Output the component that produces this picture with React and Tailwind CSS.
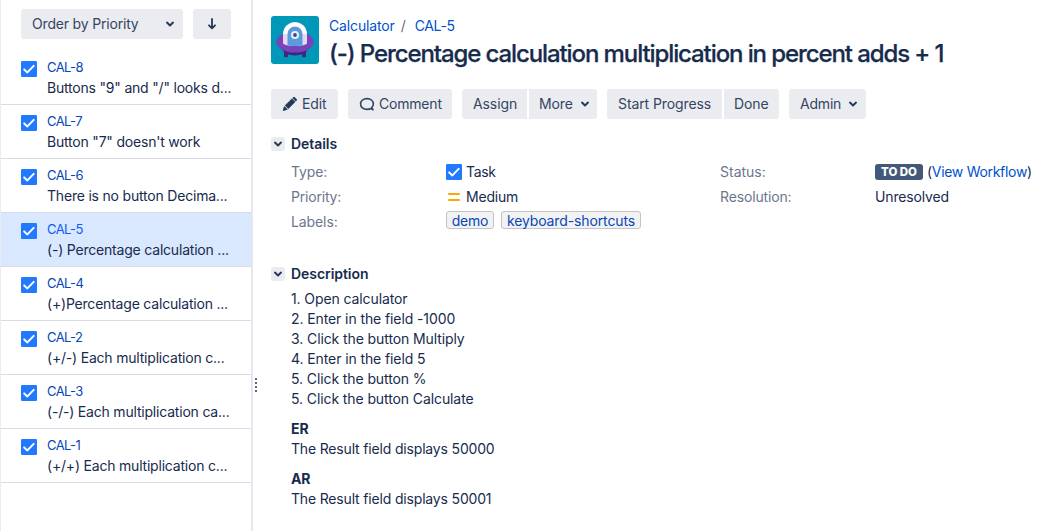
import React from "react";

const issues = [
  { id: "CAL-8", title: 'Buttons "9" and "/" looks d...' },
  { id: "CAL-7", title: 'Button "7" doesn\'t work' },
  { id: "CAL-6", title: "There is no button Decima..." },
  { id: "CAL-5", title: "(-) Percentage calculation ...", selected: true },
  { id: "CAL-4", title: "(+)Percentage calculation ..." },
  { id: "CAL-2", title: "(+/-) Each multiplication c..." },
  { id: "CAL-3", title: "(-/-) Each multiplication ca..." },
  { id: "CAL-1", title: "(+/+) Each multiplication c..." },
];

const steps = [
  "1. Open calculator",
  "2. Enter in the field -1000",
  "3. Click the button Multiply",
  "4. Enter in the field 5",
  "5. Click the button %",
  "5. Click the button Calculate",
];

function TaskIcon() {
  return (
    <svg width="16" height="16" viewBox="0 0 16 16" className="block shrink-0">
      <rect width="16" height="16" rx="1.2" fill="#2079ff" />
      <path d="M3.2 8.4 6.4 11.4 12.7 4.9" fill="none" stroke="#fff" strokeWidth="2" strokeLinecap="round" strokeLinejoin="round" />
    </svg>
  );
}

function Chevron() {
  return (
    <svg width="10" height="8" viewBox="0 0 10 8" className="block shrink-0">
      <path d="M2 2.6 5 5.4 8 2.6" fill="none" stroke="#253858" strokeWidth="2" strokeLinecap="round" strokeLinejoin="round" />
    </svg>
  );
}

function Avatar() {
  return (
    <svg width="48" height="48" viewBox="0 0 48 48" className="block shrink-0">
      <rect width="48" height="48" rx="3" fill="#0098b8" />
      <path d="M13 34h4v6.2a1 1 0 0 1-1 1h-2a1 1 0 0 1-1-1zM31 34h4v6.2a1 1 0 0 1-1 1h-2a1 1 0 0 1-1-1z" fill="#43267d" />
      <path d="M11 33c3 8.500 23 8.500 26 0z" fill="#43267d" />
      <ellipse cx="24" cy="26" rx="18.8" ry="10.5" fill="#7744bb" />
      <path d="M12 18a12 12 0 0 1 24 0v9c0 4-24 4-24 0z" fill="#e3daf2" />
      <path d="M12.500 18a11.5 11.5 0 0 1 23 0z" fill="#fff" />
      <path d="M16.500 18a7.5 7.5 0 0 1 15 0v11.3c-4 1-11 1-15 0z" fill="#5a9bdc" />
      <circle cx="24" cy="19" r="4" fill="#e9eefb" />
      <circle cx="24" cy="19" r="1.9" fill="#344c86" />
    </svg>
  );
}

function Button({ className, children }) {
  return (
    <button className={"flex h-[30px] items-center whitespace-nowrap bg-[#ebecf0] text-[#344563] " + className}>
      {children}
    </button>
  );
}

function SectionTitle({ children }) {
  return (
    <h2 className="flex h-5 items-center gap-1.5 font-semibold tracking-[-0.05px]">
      <span className="flex size-3.5 items-center justify-center rounded-[3px] bg-[#ebecf0]">
        <Chevron />
      </span>
      {children}
    </h2>
  );
}

function Sidebar() {
  return (
    <aside className="flex w-[253px] shrink-0 flex-col border-l border-r-2 border-l-[#ebecf0] border-r-[#e6e7ee]">
      <div className="flex h-[51px] gap-2.5 pl-5 pt-[9px]">
        <Button className="w-[162px] justify-between rounded-[3px] pl-[11px] pr-2">
          <span className="tracking-[-0.18px]">Order by Priority</span>
          <Chevron />
        </Button>
        <Button className="w-[38px] justify-center rounded-[3px]">
          <svg width="10" height="12" viewBox="0 0 10 12">
            <path d="M5 1v9M2 7.300l3 3 3-3" fill="none" stroke="#253858" strokeWidth="1.8" strokeLinecap="round" strokeLinejoin="round" />
          </svg>
        </Button>
      </div>
      <ul>
        {issues.map((it) => (
          <li
            key={it.id}
            className={"flex h-[54px] gap-2.5 border-b border-[#dadbe2] pl-5 pt-[9px] " + (it.selected ? "bg-[#d9e7ff]" : "")}
          >
            <div className="pt-px">
              <TaskIcon />
            </div>
            <div className="flex flex-col whitespace-nowrap">
              <span className={"h-[18px] text-[13px] leading-[15px] tracking-[-0.6px] " + (it.selected ? "text-[#0c5cf5]" : "text-[#0747b8]")}>{it.id}</span>
              <span className="leading-5 tracking-[-0.2px]">{it.title}</span>
            </div>
          </li>
        ))}
      </ul>
    </aside>
  );
}

export default function App() {
  return (
    <div className="flex h-[531px] w-[1044px] overflow-hidden bg-white font-['Inter',sans-serif] text-sm leading-5 text-[#172b4d]">
      <Sidebar />
      <div className="flex w-[18px] shrink-0 flex-col gap-0.5 pl-0.5 pt-[378px]">
        <i className="size-0.5 bg-[#5e6c84]" />
        <i className="size-0.5 bg-[#5e6c84]" />
        <i className="size-0.5 bg-[#5e6c84]" />
        <i className="size-0.5 bg-[#5e6c84]" />
      </div>
      <main className="flex min-w-0 flex-1 flex-col pt-4">
        <header className="flex h-[73px] gap-2.5">
          <Avatar />
          <div className="whitespace-nowrap">
            <nav className="flex h-5 items-center text-[#0052cc]">
              <a className="tracking-[-0.15px]">Calculator</a>
              <span className="w-5 pl-[6px] text-[#5e6c84]">/</span>
              <a className="tracking-[-0.35px]">CAL-5</a>
            </nav>
            <h1 className="text-2xl font-medium leading-9 tracking-[-1.1px] [-webkit-text-stroke:0.25px_#172b4d]">
              (-) Percentage calculation multiplication in percent adds + 1
            </h1>
          </div>
        </header>

        <div className="flex h-[45px] gap-2.5">
          <Button className="w-[67px] gap-1 rounded-[3px] pl-[11px] tracking-[-0.1px]">
            <svg width="16" height="16" viewBox="0 0 16 16" className="shrink-0">
              <path d="M1.200 14.5 2.4 10.6 5.2 13.4zM3.200 9.5 9.9 2.9 12.9 5.9 6.3 12.6zM10.700 2.1l.5-.5a1.2 1.2 0 0 1 1.7 0L14.200 3a1.2 1.2 0 0 1 0 1.700l-.5.5z" fill="#253858" stroke="#253858" strokeWidth=".8" strokeLinejoin="round" />
            </svg>
            Edit
          </Button>
          <Button className="w-[104px] gap-1 rounded-[3px] pl-[11px] tracking-[-0.2px]">
            <svg width="16" height="16" viewBox="0 0 16 16" className="shrink-0">
              <path d="M12 12.5C10.900 13.200 9.500 13.400 8 13.400 4.300 13.400 1.600 11.200 1.600 8 1.600 4.800 4.400 2.600 8 2.600s6.300 2.200 6.300 5.400c0 1.500-.6 2.700-1.600 3.600l1.300 2.100z" fill="none" stroke="#344563" strokeWidth="1.6" strokeLinejoin="round" />
            </svg>
            Comment
          </Button>
          <div className="flex gap-0.5">
            <Button className="w-[65px] rounded-l-[3px] pl-[11px] tracking-[-0.1px]">Assign</Button>
            <Button className="w-[68px] justify-between rounded-r-[3px] pl-2.5 pr-[7px] tracking-[-0.1px]">
              More
              <Chevron />
            </Button>
          </div>
          <div className="flex gap-0.5">
            <Button className="w-[115px] rounded-l-[3px] pl-[11px] tracking-[-0.1px]">Start Progress</Button>
            <Button className="w-[55px] rounded-r-[3px] pl-2.5 tracking-[-0.1px]">Done</Button>
          </div>
          <Button className="w-[77px] justify-between rounded-[3px] pl-[11px] pr-2 tracking-[-0.2px]">
            Admin
            <Chevron />
          </Button>
        </div>

        <section className="h-[130px] whitespace-nowrap">
          <SectionTitle>Details</SectionTitle>
          <div className="flex pl-5 pt-[5px] leading-[25px]">
            <dl className="grid w-[429px] auto-rows-[25px] grid-cols-[155px_1fr]">
              <dt className="tracking-[-0.15px] text-[#6b778c]">Type:</dt>
              <dd className="flex items-center gap-1 tracking-[-0.3px]">
                <TaskIcon />
                Task
              </dd>
              <dt className="tracking-[-0.2px] text-[#6b778c]">Priority:</dt>
              <dd className="flex items-center gap-1 tracking-[-0.2px]">
                <svg width="16" height="16" viewBox="0 0 16 16">
                  <path d="M3 5h10M3 11h10" stroke="#ffa500" strokeWidth="2" strokeLinecap="round" />
                </svg>
                Medium
              </dd>
              <dt className="tracking-[-0.1px] text-[#6b778c]">Labels:</dt>
              <dd className="flex items-start gap-[7px] pt-[2px] text-[#0747b8]">
                <a className="flex h-[18px] w-12 items-center justify-center rounded-[3px] border border-[#c4c4c4] bg-[#f2f2f2] pt-px leading-[17px] tracking-[-0.2px]">demo</a>
                <a className="flex h-[18px] w-[140px] items-center justify-center rounded-[3px] border border-[#c4c4c4] bg-[#f2f2f2] pt-px leading-[17px] tracking-[-0.12px]">keyboard-shortcuts</a>
              </dd>
            </dl>
            <dl className="grid auto-rows-[25px] grid-cols-[155px_auto]">
              <dt className="text-[#6b778c]">Status:</dt>
              <dd className="flex items-center">
                <span className="mr-1 flex h-4 w-12 items-center justify-center rounded-[3px] bg-[#42597a] text-[11.5px] font-extrabold leading-4 text-white">TO DO</span>
                <span className="tracking-[-0.3px]">
                  (<a className="text-[#0052cc]">View Workflow</a>)
                </span>
              </dd>
              <dt className="tracking-[-0.15px] text-[#6b778c]">Resolution:</dt>
              <dd className="tracking-[-0.15px]">Unresolved</dd>
            </dl>
          </div>
        </section>

        <section className="whitespace-nowrap">
          <SectionTitle>Description</SectionTitle>
          <div className="flex flex-col gap-2.5 pl-5 pt-[5px] tracking-[-0.1px]">
            <div>
              {steps.map((s) => (
                <p key={s}>{s}</p>
              ))}
            </div>
            <div>
              <p className="font-bold">ER</p>
              <p className="tracking-[-0.17px]">The Result field displays 50000</p>
            </div>
            <div>
              <p className="font-bold">AR</p>
              <p className="tracking-[-0.17px]">The Result field displays 50001</p>
            </div>
          </div>
        </section>
      </main>
    </div>
  );
}
